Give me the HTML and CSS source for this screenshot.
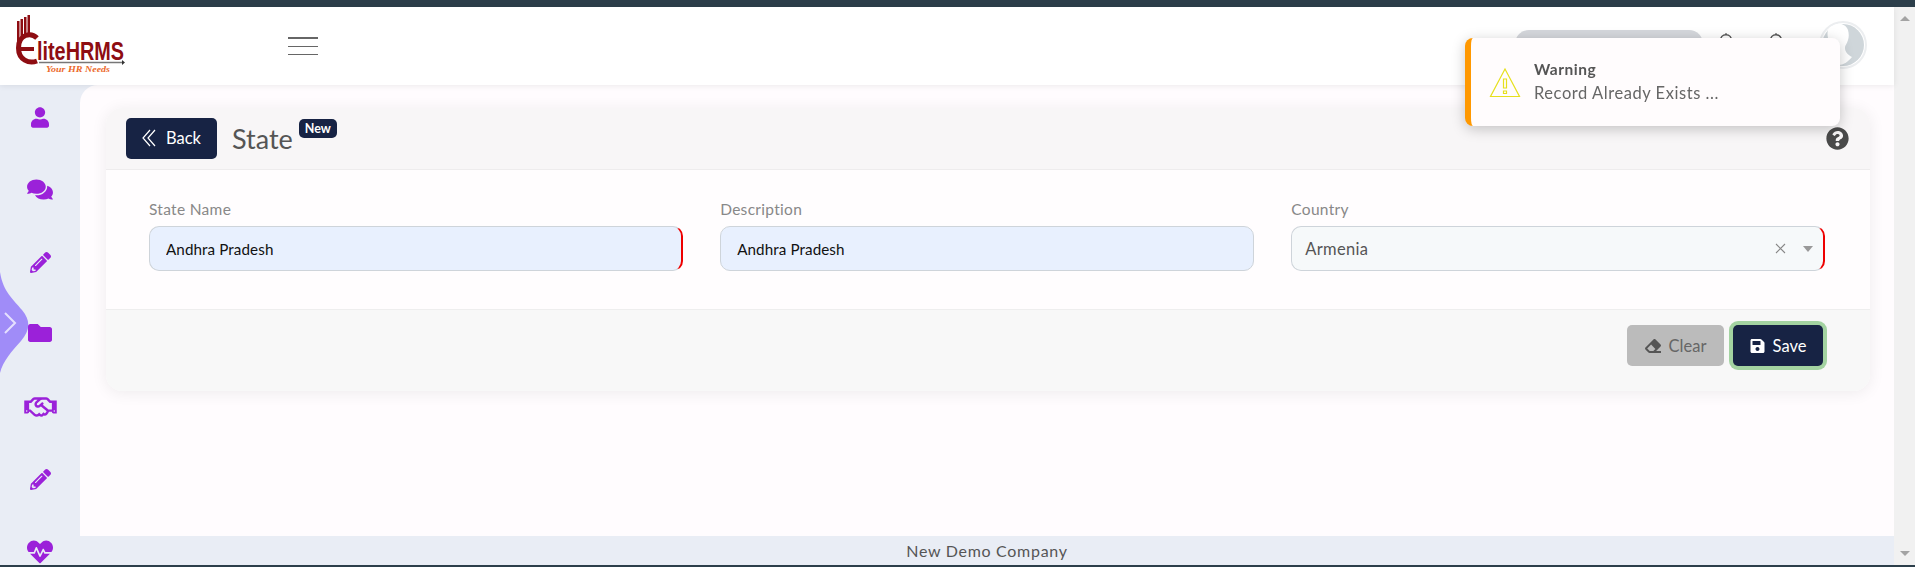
FILE: index.html
```html
<!DOCTYPE html>
<html lang="en">
<head>
  <meta charset="UTF-8" />
  <title>State</title>
  <link rel="stylesheet" href="styles.css">
</head>
<body>
  <svg class="defs" width="0" height="0">
    <symbol id="i-pencil" viewBox="0 0 512 512"><path d="M497.9 142.1l-46.1 46.1c-4.7 4.7-12.3 4.7-17 0l-111-111c-4.7-4.7-4.7-12.3 0-17l46.1-46.1c18.7-18.7 49.1-18.7 67.9 0l60.1 60.1c18.8 18.7 18.8 49.1 0 67.9zM284.2 99.8L21.6 362.4.4 483.9c-2.9 16.4 11.4 30.6 27.8 27.8l121.5-21.3 262.6-262.6c4.7-4.7 4.7-12.3 0-17l-111-111c-4.8-4.7-12.4-4.7-17.1 0zM124.1 339.9c-5.5-5.5-5.5-14.3 0-19.8l154-154c5.5-5.5 14.3-5.5 19.8 0s5.5 14.3 0 19.8l-154 154c-5.5 5.5-14.3 5.5-19.8 0zM88 424h48v36.3l-64.5 11.3-31.1-31.1L51.7 376H88v48z"/></symbol>
    <symbol id="i-bell" viewBox="0 0 448 512"><path fill="none" stroke="#555" stroke-width="36" d="M224 30v36M224 66c-80 0-130 60-130 140 0 110-60 130-60 170h380c0-40-60-60-60-170 0-80-50-140-130-140z"/></symbol>
  </svg>

  <div class="topbar"></div>

  <div class="shell">
    <div class="page">
      <header class="header">
        <svg class="logo" viewBox="0 0 150 62" width="150" height="62">
          <path class="logo-hand" d="M2 7h2.500v20H2zM5.500 5H8v20H5.500zM9 3h2.500v20H9zM12.500 1H15v22h-2.500z"/>
          <path class="logo-stroke" d="M22 24C16 18 3.500 20 3.500 34 3.500 46 14 50 22 47"/>
          <rect class="logo-hand" x="6" y="33" width="13" height="4"/>
          <text class="logo-name" x="22" y="46" textLength="87" lengthAdjust="spacingAndGlyphs">liteHRMS</text>
          <path class="logo-rule" d="M24 48.500h83"/>
          <path class="logo-arrow" d="M107 46l3 2.500-3 2.500z"/>
          <text class="logo-tag" x="31" y="58" textLength="64" lengthAdjust="spacingAndGlyphs">Your HR Needs</text>
        </svg>
        <div class="burger"><span></span><span></span><span></span></div>
        <div class="header-right">
          <div class="search-pill"></div>
          <svg class="bell" width="20" height="22"><use href="#i-bell"/></svg>
          <svg class="bell" width="20" height="22"><use href="#i-bell"/></svg>
          <div class="avatar">
            <svg viewBox="0 0 44 44" width="44" height="44">
              <circle cx="22" cy="22" r="21" fill="#cfd6da"/>
              <path fill="#fff" d="M11 2c6-3 14-1 16 5 1 4 1 7 0 10-1 4-3 5-3 8 0 4 3 7 7 9-4 5-9 8-13 8-6 0-15-5-19-12 4-3 9-4 10-7 1-2-1-5-2-8-1-5-1-10 4-13z"/>
            </svg>
          </div>
        </div>
      </header>

      <div class="content">
        <nav class="sidebar">
          <svg class="wave" viewBox="0 0 30 101" width="30" height="101">
            <path fill="#a08cf8" d="M0 0C3 20 14 28 22 38c9 11 8 20-1 31C12 79 3 89 0 101z"/>
            <path fill="none" stroke="#e5e0fe" stroke-width="2" d="M5 41l10 10-10 10"/>
          </svg>
          <a class="nav-item"><svg class="ic" width="18" height="21" viewBox="0 0 448 512"><path d="M224 256c70.700 0 128-57.300 128-128S294.700 0 224 0 96 57.300 96 128s57.300 128 128 128zm89.600 32h-16.700c-22.200 10.200-46.900 16-72.900 16s-50.600-5.800-72.900-16h-16.700C60.200 288 0 348.200 0 422.400V464c0 26.500 21.500 48 48 48h352c26.500 0 48-21.500 48-48v-41.600c0-74.200-60.200-134.400-134.400-134.400z"/></svg></a>
          <a class="nav-item"><svg class="ic" width="26" height="23" viewBox="0 0 576 512"><path d="M416 192c0-88.400-93.100-160-208-160S0 103.600 0 192c0 34.300 14.100 65.900 38 92-13.400 30.200-35.500 54.200-35.800 54.500-2.200 2.300-2.800 5.700-1.500 8.700S4.800 352 8 352c36.600 0 66.900-12.300 88.700-25 32.200 15.700 70.300 25 111.300 25 114.900 0 208-71.600 208-160zm122 220c23.900-26 38-57.700 38-92 0-66.900-53.500-124.200-129.300-148.100.9 6.600 1.300 13.300 1.300 20.100 0 105.900-107.700 192-240 192-10.800 0-21.300-.8-31.700-1.900C207.800 439.600 281.800 480 368 480c41 0 79.100-9.200 111.300-25 21.800 12.700 52.100 25 88.700 25 3.200 0 6.100-1.900 7.300-4.800 1.300-2.900.7-6.300-1.500-8.700-.3-.3-22.400-24.200-35.800-54.500z"/></svg></a>
          <a class="nav-item"><svg class="ic" width="21" height="21"><use href="#i-pencil"/></svg></a>
          <a class="nav-item"><svg class="ic ic-folder" width="24" height="24" viewBox="0 0 512 512"><path d="M464 128H272l-64-64H48C21.490 64 0 85.490 0 112v288c0 26.510 21.490 48 48 48h416c26.510 0 48-21.490 48-48V176c0-26.510-21.490-48-48-48z"/></svg></a>
          <a class="nav-item"><svg class="ic" width="33" height="26" viewBox="0 0 640 512"><path d="M519.200 127.900l-47.600-47.600A56.252 56.252 0 0 0 432 64H205.200c-14.800 0-29.100 5.900-39.600 16.300L118 127.900H0v255.700h64c17.600 0 31.800-14.200 31.900-31.700h9.100l84.600 76.400c30.900 25.100 73.800 25.700 105.600 3.800 12.500 10.800 26 15.900 41.100 15.900 18.200 0 35.300-7.400 48.800-24 22.100 8.700 48.200 2.600 64-16.800l26.200-32.300c5.600-6.900 9.100-14.800 10.900-23h57.900c.1 17.500 14.400 31.700 31.900 31.700h64V127.900H519.200zM48 351.600c-8.800 0-16-7.200-16-16s7.200-16 16-16 16 7.200 16 16c0 8.900-7.200 16-16 16zm390-6.900l-26.100 32.200c-2.800 3.400-7.800 4-11.300 1.200l-23.900-19.400-30 36.500c-6 7.300-15 4.800-18 2.400l-36.800-31.500-15.600 19.200c-13.900 17.100-39.200 19.700-55.300 6.600l-97.300-88H96V175.800h41.900l61.700-61.600c2-.8 3.700-1.500 5.700-2.300H262l-38.700 35.500c-29.400 26.900-31.100 72.300-4.400 101.300 14.800 16.200 61.200 41.200 101.500 4.400l8.200-7.500 108.200 87.800c3.400 2.800 3.900 7.900 1.200 11.300zm106-40.800h-69.200c-2.300-2.800-4.900-5.400-7.700-7.700l-102.700-83.400 12.500-11.400c6.500-6 7-16.100 1-22.600L367 167.100c-6-6.500-16.100-6.900-22.600-1l-55.200 50.600c-9.500 8.700-25.700 9.400-34.600 0-9.300-9.900-8.500-25.100 1.200-33.900l65.600-60.100c7.400-6.800 17-10.500 27-10.500l83.700-.2c2.100 0 4.100.8 5.500 2.300l61.700 61.600H544v128zm48 47.700c-8.800 0-16-7.200-16-16s7.200-16 16-16 16 7.200 16 16c0 8.900-7.200 16-16 16z"/></svg></a>
          <a class="nav-item"><svg class="ic" width="21" height="21"><use href="#i-pencil"/></svg></a>
          <a class="nav-item"><svg class="ic" width="26" height="26" viewBox="0 0 512 512"><path d="M320.200 243.800l-49.700 99.400c-6 12.100-23.400 11.700-28.900-.6l-56.900-126.300-30 71.700H60.600l182.500 186.500c7.100 7.300 18.600 7.300 25.700 0L451.400 288H342.300l-22.100-44.200zM473.700 73.900l-2.400-2.500c-51.500-52.600-135.800-52.600-187.400 0L256 100l-27.900-28.500c-51.500-52.700-135.900-52.700-187.400 0l-2.400 2.400C-10.400 123.700-12.500 203 31 256h102.400l35.900-86.200c5.400-12.900 23.600-13.200 29.400-.4l58.200 129.300 49-97.900c5.900-11.800 22.700-11.800 28.600 0l27.600 55.200H481c43.500-53 41.400-132.300-7.300-182.100z"/></svg></a>
        </nav>

        <div class="main-col">
          <main class="main">
            <section class="card">
              <div class="card-head">
                <button class="btn btn-dark btn-back" type="button">
                  <svg width="14" height="18" viewBox="0 0 14 18"><path fill="none" stroke="#fff" stroke-width="1.200" d="M8 1L1 9l7 8M13 1L6 9l7 8"/></svg>
                  Back
                </button>
                <h2 class="title">State</h2>
                <span class="badge">New</span>
                <svg class="help" width="23" height="23" viewBox="0 0 512 512"><path d="M504 256c0 136.997-111.043 248-248 248S8 392.997 8 256C8 119.083 119.043 8 256 8s248 111.083 248 248zM262.655 90c-54.497 0-89.255 22.957-116.549 63.758-3.536 5.286-2.353 12.415 2.715 16.258l34.699 26.310c5.205 3.947 12.621 3.008 16.665-2.122 17.864-22.658 30.113-35.797 57.303-35.797 20.429 0 45.698 13.148 45.698 32.958 0 14.976-12.363 22.667-32.534 33.976C247.128 238.528 216 254.941 216 296v4c0 6.627 5.373 12 12 12h56c6.627 0 12-5.373 12-12v-1.333c0-28.462 83.186-29.647 83.186-106.667 0-58.002-60.165-102-116.531-102zM256 338c-25.365 0-46 20.635-46 46 0 25.364 20.635 46 46 46s46-20.636 46-46c0-25.365-20.635-46-46-46z"/></svg>
              </div>

              <div class="card-body">
                <div class="form-group">
                  <label>State Name</label>
                  <input class="field req" type="text" value="Andhra Pradesh" />
                </div>
                <div class="form-group">
                  <label>Description</label>
                  <input class="field" type="text" value="Andhra Pradesh" />
                </div>
                <div class="form-group">
                  <label>Country</label>
                  <div class="select req">
                    <span class="select-value">Armenia</span>
                    <svg class="select-clear" width="11" height="11" viewBox="0 0 11 11"><path fill="none" stroke="#888" stroke-width="1.100" d="M1 1l9 9M10 1l-9 9"/></svg>
                    <span class="select-caret"></span>
                  </div>
                </div>
              </div>

              <div class="card-foot">
                <button class="btn btn-clear" type="button">
                  <svg width="16" height="16" viewBox="0 0 512 512"><path fill="#555" d="M497.941 273.941c18.745-18.745 18.745-49.137 0-67.882l-160-160c-18.745-18.745-49.136-18.746-67.883 0l-256 256c-18.745 18.745-18.745 49.137 0 67.882l96 96A48.004 48.004 0 0 0 144 480h356c6.627 0 12-5.373 12-12v-40c0-6.627-5.373-12-12-12H355.883l142.058-142.059zm-302.627-62.627l137.373 137.373L265.373 416H150.628l-80-80 124.686-124.686z"/></svg>
                  Clear
                </button>
                <button class="btn btn-dark btn-save" type="button">
                  <svg width="15" height="16" viewBox="0 0 448 512"><path fill="#fff" d="M433.941 129.941l-83.882-83.882A48 48 0 0 0 316.118 32H48C21.490 32 0 53.490 0 80v352c0 26.510 21.490 48 48 48h352c26.510 0 48-21.490 48-48V163.882a48 48 0 0 0-14.059-33.941zM224 416c-35.346 0-64-28.654-64-64 0-35.346 28.654-64 64-64s64 28.654 64 64c0 35.346-28.654 64-64 64zm96-304.520V212c0 6.627-5.373 12-12 12H76c-6.627 0-12-5.373-12-12V108c0-6.627 5.373-12 12-12h228.520c3.183 0 6.235 1.264 8.485 3.515l3.480 3.480A11.996 11.996 0 0 1 320 111.480z"/></svg>
                  Save
                </button>
              </div>
            </section>
          </main>
          <footer class="footer">New Demo Company</footer>
        </div>
      </div>
    </div>

    <div class="scrollbar">
      <span class="arrow-up"></span>
      <span class="arrow-down"></span>
    </div>
  </div>

  <div class="bottombar"></div>

  <!-- TOAST -->
  <div class="toast">
    <svg class="toast-icon" width="32" height="31" viewBox="0 0 32 31">
      <path fill="none" stroke="#e6e01e" stroke-width="1.200" d="M16 2L1.500 29.500h29z"/>
      <path fill="none" stroke="#e6e01e" stroke-width="1.200" d="M14.500 12h3v9h-3zM14.500 24h3v2.500h-3z"/>
    </svg>
    <div class="toast-text">
      <strong>Warning</strong>
      <span>Record Already Exists ...</span>
    </div>
  </div>
</body>
</html>
```

FILE: styles.css
```css
* {
  margin: 0;
  padding: 0;
  box-sizing: border-box;
  font-family: "Lato", "Noto Sans", sans-serif;
}

html, body {
  height: 100%;
}

body {
  display: flex;
  flex-direction: column;
  overflow: hidden;
  background: #fff;
}

.defs {
  position: absolute;
}

.topbar {
  height: 7px;
  background: #2c3e4a;
}

.bottombar {
  height: 2px;
  background: #2c3e4a;
}

.shell {
  flex: 1;
  min-height: 0;
  display: flex;
}

.page {
  flex: 1;
  min-width: 0;
  display: flex;
  flex-direction: column;
}

.scrollbar {
  width: 21px;
  background: #f1f1f1;
  display: flex;
  flex-direction: column;
  justify-content: space-between;
  align-items: center;
  padding: 9px 0;
}

.arrow-up {
  border-left: 5px solid transparent;
  border-right: 5px solid transparent;
  border-bottom: 5px solid #a3a3a3;
}

.arrow-down {
  border-left: 5px solid transparent;
  border-right: 5px solid transparent;
  border-top: 5px solid #a3a3a3;
}

/* header */
.header {
  height: 78px;
  flex-shrink: 0;
  display: flex;
  align-items: center;
  padding: 0 29px 0 15px;
  background: #fff;
  box-shadow: 0 1px 6px rgba(0,0,0,0.08);
  position: relative;
  z-index: 1;
}

.logo {
  flex-shrink: 0;
  margin-top: -2px;
}

.logo-hand {
  fill: #8e0d12;
}

.logo-stroke {
  fill: none;
  stroke: #8e0d12;
  stroke-width: 5;
}

.logo-name {
  font-family: "Liberation Sans Narrow", "Liberation Sans", sans-serif;
  font-size: 26px;
  font-weight: bold;
  fill: #8e0d12;
}

.logo-rule {
  stroke: #777;
  stroke-width: 1.500;
}

.logo-arrow {
  fill: #333;
}

.logo-tag {
  font-family: "Liberation Serif", serif;
  font-size: 9px;
  font-style: italic;
  font-weight: bold;
  fill: #ec6a2c;
}

.burger {
  width: 30px;
  margin-left: 123px;
  display: flex;
  flex-direction: column;
  gap: 7px;
}

.burger span {
  height: 1px;
  background: #666;
}

.burger span:first-child {
  height: 2px;
}

.header-right {
  margin-left: auto;
  display: flex;
  align-items: flex-start;
  margin-top: 4px;
}

.search-pill {
  width: 188px;
  height: 36px;
  border-radius: 14px;
  background: #d5d7dc;
}

.bell {
  margin-left: 13px;
  margin-top: 2px;
}

.bell + .bell {
  margin-left: 30px;
}

.avatar {
  width: 44px;
  height: 44px;
  margin-left: 35px;
  margin-top: -7px;
  border-radius: 50%;
  box-shadow: 0 0 0 2px #eceef0;
  overflow: hidden;
}

/* sidebar */
.content {
  flex: 1;
  min-height: 0;
  display: flex;
}

.sidebar {
  width: 80px;
  flex-shrink: 0;
  background: #e9edf5;
  display: flex;
  flex-direction: column;
  gap: 8.500px;
  overflow: hidden;
  position: relative;
}

.nav-item {
  height: 64px;
  flex-shrink: 0;
  display: flex;
  justify-content: center;
  align-items: center;
}

.ic {
  fill: #9b21d9;
}

.ic-folder {
  margin-bottom: 4px;
}

.wave {
  position: absolute;
  left: 0;
  top: 187px;
}

/* main */
.main-col {
  flex: 1;
  min-width: 0;
  display: flex;
  flex-direction: column;
  background: #e9edf5;
}

.main {
  flex: 1;
  min-height: 0;
  padding: 23px 24px 0 26px;
  background: #fffcfe;
  border-top-left-radius: 18px;
}

.footer {
  height: 29px;
  flex-shrink: 0;
  display: flex;
  justify-content: center;
  align-items: center;
  font-size: 16px;
  letter-spacing: 0.700px;
  color: #555;
}

.card {
  border-radius: 16px;
  overflow: hidden;
  box-shadow: 0 2px 16px rgba(0,0,0,0.07);
  background: #fffdfe;
}

.card-head {
  height: 62px;
  display: flex;
  align-items: center;
  padding: 0 21px 1px 20px;
  background: #f8f6f7;
  border-bottom: 1px solid #eeeced;
}

.title {
  margin-left: 15px;
  font-size: 27px;
  font-weight: 400;
  color: #555;
}

.badge {
  align-self: flex-start;
  margin-top: 11px;
  margin-left: 6px;
  height: 19px;
  padding: 0 6px;
  border-radius: 5px;
  background: #172344;
  color: #fff;
  font-size: 12.500px;
  font-weight: 700;
  line-height: 19px;
}

.help {
  margin-left: auto;
  fill: #4a4a4a;
}

.card-body {
  height: 139px;
  padding: 31px 45px 0 43px;
  display: grid;
  grid-template-columns: repeat(3, 1fr);
  column-gap: 37.500px;
}

.form-group label {
  display: block;
  margin-bottom: 8px;
  font-size: 15.500px;
  line-height: 17px;
  letter-spacing: 0.300px;
  color: #888;
}

.field {
  display: block;
  width: 100%;
  height: 45px;
  padding: 0 16px;
  border: 1px solid #ced4da;
  border-radius: 10px;
  background: #e8f0fe;
  font-size: 15.200px;
  letter-spacing: 0.100px;
  color: #111;
  outline: none;
}

.req {
  border-right: 2px solid #ee0000;
}

.select {
  height: 45px;
  display: flex;
  align-items: center;
  padding: 0 10px 0 13px;
  border: 1px solid #ced4da;
  border-radius: 10px;
  background: #f6f9fa;
}

.select.req {
  border-right: 2px solid #ee0000;
}

.select-value {
  flex: 1;
  font-size: 16.500px;
  letter-spacing: 0.300px;
  color: #555;
}

.select-clear {
  margin-right: 17px;
}

.select-caret {
  border-left: 5px solid transparent;
  border-right: 5px solid transparent;
  border-top: 6px solid #999;
}

.card-foot {
  height: 82px;
  display: flex;
  justify-content: flex-end;
  align-items: flex-start;
  gap: 9px;
  padding: 15px 47px 0 0;
  background: #f8f8f8;
  border-top: 1px solid #eeeeee;
}

.btn {
  height: 41px;
  display: flex;
  align-items: center;
  justify-content: center;
  gap: 8px;
  border: none;
  border-radius: 5px;
  font-size: 16.500px;
  cursor: pointer;
}

.btn-dark {
  background: #172344;
  color: #fff;
}

.btn-back {
  width: 91px;
  gap: 10px;
}

.btn-clear {
  width: 97px;
  background: #bbbbbb;
  color: #666;
}

.btn-save {
  width: 90px;
  box-shadow: 0 0 0 4px #a3d3a1;
}

/* toast */
.toast {
  position: fixed;
  top: 38px;
  left: 1465px;
  width: 375px;
  height: 88px;
  display: flex;
  align-items: center;
  gap: 13px;
  padding-left: 18px;
  border-left: 6px solid #ff9800;
  border-radius: 8px;
  background: #fffcfd;
  box-shadow: 0 3px 14px rgba(0,0,0,0.22);
  z-index: 5;
}

.toast-text {
  display: flex;
  flex-direction: column;
  gap: 6px;
  margin-top: -3px;
  font-size: 16.500px;
  letter-spacing: 0.550px;
  line-height: 18px;
  color: #666;
}

.toast-text strong {
  font-size: 15.500px;
  letter-spacing: 0.500px;
  font-weight: 700;
  color: #555;
}
```
